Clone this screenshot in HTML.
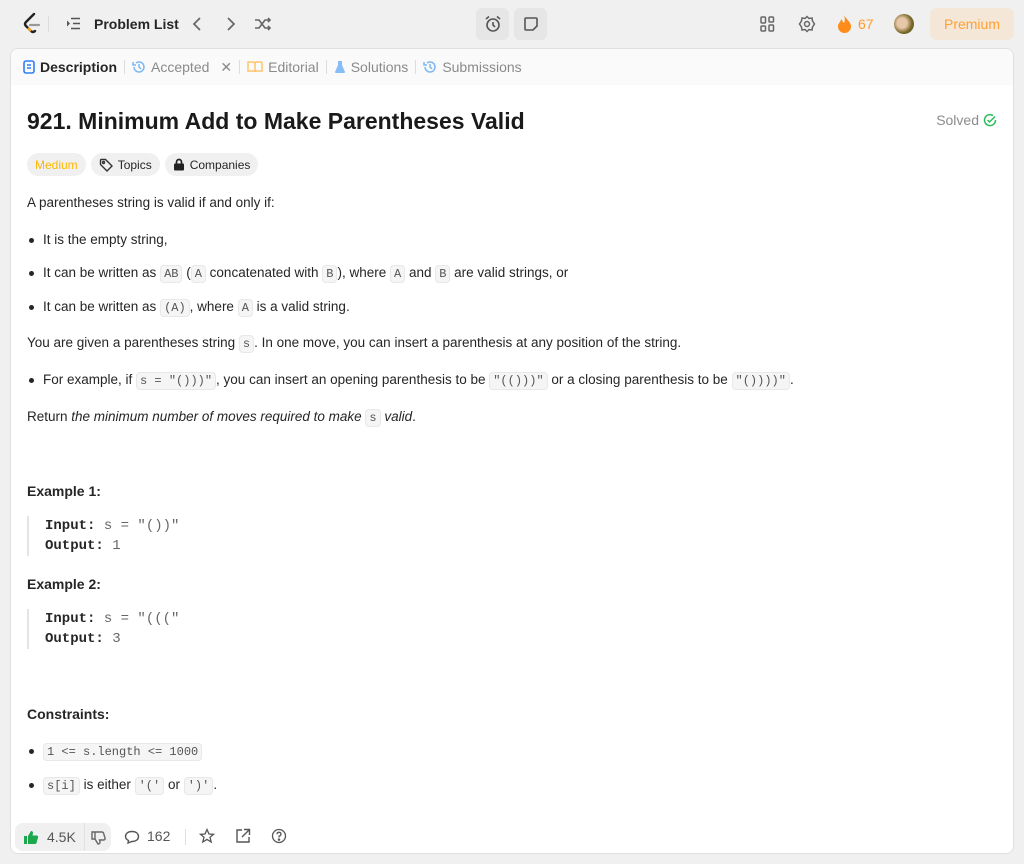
<!DOCTYPE html>
<html><head><meta charset="utf-8"><style>
*{box-sizing:border-box;margin:0;padding:0}
body{width:1024px;height:864px;background:#f0f0f0;font-family:"Liberation Sans",sans-serif;color:#262626;position:relative;overflow:hidden;font-size:14px}
.abs{position:absolute}
.top{height:48px}
.panel{position:absolute;left:10px;top:48px;width:1004px;height:806px;background:#fff;border:1px solid #e0e0e0;border-radius:8px;overflow:hidden}
.tabs{height:36px;background:#fafafa;display:flex;align-items:center;padding-left:12px;font-size:14px;color:#8a8a8a}
.tab{display:flex;align-items:center;gap:5px;padding:0 7px}
.sep{width:1px;height:14px;background:#ddd}
code{font-family:"Liberation Mono",monospace;font-size:12px;background:#f5f5f5;border:1px solid #e8e8e8;border-radius:4px;padding:1px 3px;color:#555}
.c{position:absolute;left:16px;right:16px}
p,li{font-size:13.5px;line-height:20px}
ul{list-style:none}
li{position:relative;padding-left:16px}
li:before{content:"";position:absolute;left:2px;top:8px;width:5px;height:5px;border-radius:50%;background:#262626}
.pill{display:inline-flex;align-items:center;gap:5px;height:23px;padding:0 8px;border-radius:12px;background:#f0f0f0;font-size:12px;color:#262626}
pre{font-family:"Liberation Mono",monospace;font-size:14px;line-height:20px;border-left:2px solid #e4e4e4;padding-left:16px;color:#666}
pre b{color:#262626}
h4{font-size:14px;font-weight:bold}
</style></head><body>
<div class="top">
 <svg class="abs" style="left:22px;top:12px" width="20" height="22" viewBox="0 0 20 22"><path d="M12 2 L4 10 Q2 12 4 14 L9 19 Q11 21 13 19" fill="none" stroke="#222" stroke-width="2.4" stroke-linecap="round"/><path d="M8 13 H17" stroke="#999" stroke-width="2.2" stroke-linecap="round"/><path d="M6 16 L9 19" stroke="#f89f1b" stroke-width="2.4"/></svg>
 <div class="abs" style="left:48px;top:16px;width:1px;height:16px;background:#ddd"></div>
 <svg class="abs" style="left:66px;top:17px" width="15" height="13" viewBox="0 0 15 13" stroke="#555" stroke-width="1.6"><path d="M5 1.5H14M7 6.5H14M5 11.5H14"/><path d="M1 3.5L4 6.5L1 9.5Z" fill="#555" stroke="none"/></svg>
 <div class="abs" style="left:94px;top:16px;font-size:14px;font-weight:bold;color:#262626">Problem List</div>
 <svg class="abs" style="left:190px;top:16px" width="16" height="16" fill="none" stroke="#666" stroke-width="1.7"><path d="M10 2L4 8L10 14"/></svg>
 <svg class="abs" style="left:222px;top:16px" width="16" height="16" fill="none" stroke="#666" stroke-width="1.7"><path d="M6 2L12 8L6 14"/></svg>
 <svg class="abs" style="left:254px;top:16px" width="18" height="16" fill="none" stroke="#666" stroke-width="1.6"><path d="M1 4H5L11 12H16M1 12H5L11 4H16M14 2L16 4L14 6M14 10L16 12L14 14"/></svg>
 <div class="abs" style="left:476px;top:8px;width:33px;height:32px;background:#e6e6e6;border-radius:6px"></div>
 <svg class="abs" style="left:484px;top:15px" width="18" height="18" fill="none" stroke="#555" stroke-width="1.6"><circle cx="9" cy="10" r="6"/><path d="M9 7V10L11 12M2 4L5 1.5M16 4L13 1.5"/></svg>
 <div class="abs" style="left:514px;top:8px;width:33px;height:32px;background:#e6e6e6;border-radius:6px"></div>
 <svg class="abs" style="left:523px;top:16px" width="16" height="16" fill="none" stroke="#555" stroke-width="1.6"><path d="M2 3Q2 2 3 2H13Q14 2 14 3V10L10 14H3Q2 14 2 13Z"/></svg>
 <svg class="abs" style="left:760px;top:16px" width="15" height="16" fill="none" stroke="#666" stroke-width="1.5"><rect x="1" y="1" width="4.5" height="6" rx="1"/><rect x="1" y="10" width="4.5" height="5" rx="1"/><rect x="9" y="1" width="4.5" height="5" rx="1"/><rect x="9" y="9" width="4.5" height="6" rx="1"/></svg>
 <svg class="abs" style="left:798px;top:15px" width="18" height="18" fill="none" stroke="#666" stroke-width="1.5"><circle cx="9" cy="9" r="2.5"/><path d="M9 1.5L11 3.5L14 3L14.5 6L16.5 9L14.5 12L14 15L11 14.5L9 16.5L7 14.5L4 15L3.5 12L1.5 9L3.5 6L4 3L7 3.5Z"/></svg>
 <svg class="abs" style="left:837px;top:14px" width="15" height="19" viewBox="0 0 15 19"><path d="M7 1C9 5 14 8 14 12.5A6.5 6.5 0 0 1 1 12.5C1 9 4 8 4 5C6 7 6 9 7 9C8 7 8 4 7 1Z" fill="#ff8c1a"/></svg>
 <div class="abs" style="left:858px;top:16px;color:#ff9b2f;font-size:14px">67</div>
 <div class="abs" style="left:894px;top:14px;width:20px;height:20px;border-radius:50%;background:radial-gradient(circle at 40% 45%,#e8c7a8 0 30%,#7a6a2a 60%,#4b4a20)"></div>
 <div class="abs" style="left:930px;top:8px;width:84px;height:32px;background:#f5e7d7;border-radius:7px;color:#ffa033;font-size:14px;text-align:center;line-height:32px">Premium</div>
</div>
<div class="panel">
 <div class="tabs">
  <div class="tab" style="color:#262626;font-weight:bold;padding-left:0"><svg width="12" height="14" fill="none" stroke="#2d7ff9" stroke-width="1.6"><rect x="1" y="1" width="10" height="12" rx="2"/><path d="M4 5H8M4 8H8"/></svg>Description</div>
  <div class="sep"></div>
  <div class="tab"><svg width="14" height="14" fill="none" stroke="#7cb8f5" stroke-width="1.5"><path d="M2 7A5 5 0 1 0 4 3M1 2V5H4M7 4V7L9 9"/></svg>Accepted<span style="margin-left:6px">✕</span></div>
  <div class="sep"></div>
  <div class="tab"><svg width="16" height="12" fill="none" stroke="#ffc46b" stroke-width="1.5"><path d="M1 1H6Q8 1 8 3V11Q8 10 6 10H1ZM15 1H10Q8 1 8 3M8 11Q8 10 10 10H15V1"/></svg>Editorial</div>
  <div class="sep"></div>
  <div class="tab"><svg width="12" height="14"><path d="M4 1H8V5L11 12Q11 13 10 13H2Q1 13 1 12L4 5Z" fill="#86bdf7"/></svg>Solutions</div>
  <div class="sep"></div>
  <div class="tab"><svg width="14" height="14" fill="none" stroke="#7cb8f5" stroke-width="1.5"><path d="M2 7A5 5 0 1 0 4 3M1 2V5H4M7 4V7L9 9"/></svg>Submissions</div>
 </div>
 <div class="c" style="top:59px;font-size:23px;font-weight:bold;color:#1a1a1a">921. Minimum Add to Make Parentheses Valid</div>
 <div class="abs" style="right:16px;top:63px;font-size:14px;color:#8c8c8c;display:flex;align-items:center;gap:4px">Solved <svg width="14" height="14" fill="none" stroke="#2cbb5d" stroke-width="1.5"><path d="M12.5 7A5.5 5.5 0 1 1 10 2.5"/><path d="M4.5 7L6.5 9L12 3.5"/></svg></div>
 <div class="c" style="top:104px;display:flex;gap:5px">
  <span class="pill" style="color:#ffb800">Medium</span>
  <span class="pill"><svg width="14" height="14" fill="none" stroke="#333" stroke-width="1.4"><path d="M1.5 2V6.5L8 13L13 8L6.5 1.5H2Z"/><circle cx="4.5" cy="4.5" r="1"/></svg>Topics</span>
  <span class="pill"><svg width="12" height="13"><rect x="1" y="5.5" width="10" height="7" rx="1" fill="#222"/><path d="M3.5 6V4A2.5 2.5 0 0 1 8.5 4V6" fill="none" stroke="#222" stroke-width="1.7"/></svg>Companies</span>
 </div>
 <p class="c" style="top:144px">A parentheses string is valid if and only if:</p>
 <ul class="c" style="top:181px">
  <li>It is the empty string,</li>
  <li style="margin-top:13px">It can be written as <code>AB</code> (<code>A</code> concatenated with <code>B</code>), where <code>A</code> and <code>B</code> are valid strings, or</li>
  <li style="margin-top:13px">It can be written as <code>(A)</code>, where <code>A</code> is a valid string.</li>
 </ul>
 <p class="c" style="top:284px">You are given a parentheses string <code>s</code>. In one move, you can insert a parenthesis at any position of the string.</p>
 <ul class="c" style="top:321px"><li>For example, if <code>s = "()))"</code>, you can insert an opening parenthesis to be <code>"(()))"</code> or a closing parenthesis to be <code>"())))"</code>.</li></ul>
 <p class="c" style="top:358px">Return <i>the minimum number of moves required to make <code style="font-style:normal">s</code> valid</i>.</p>
 <h4 class="c" style="top:434px">Example 1:</h4>
 <pre class="c" style="top:467px"><b>Input:</b> s = "())"
<b>Output:</b> 1</pre>
 <h4 class="c" style="top:527px">Example 2:</h4>
 <pre class="c" style="top:560px"><b>Input:</b> s = "((("
<b>Output:</b> 3</pre>
 <h4 class="c" style="top:657px">Constraints:</h4>
 <ul class="c" style="top:692px">
  <li><code>1 &lt;= s.length &lt;= 1000</code></li>
  <li style="margin-top:13px"><code>s[i]</code> is either <code>'('</code> or <code>')'</code>.</li>
 </ul>
 <div class="abs" style="left:4px;top:774px;width:96px;height:28px;background:#f0f0f0;border-radius:8px;display:flex;align-items:center;font-size:14px;color:#555">
  <svg style="margin-left:8px" width="16" height="15"><path d="M1 6H4V14H1ZM5 6L8 1Q10 1 10 3L9.5 5.5H14Q15.5 6 15 7.5L13.5 13Q13 14 12 14H5Z" fill="#1ca84d"/></svg>
  <span style="margin-left:8px">4.5K</span>
  <div style="width:1px;height:28px;background:#e0e0e0;margin-left:8px"></div>
  <svg style="margin-left:6px" width="16" height="15" fill="none" stroke="#666" stroke-width="1.4"><path d="M1 2H4V9H1ZM4 9L7 14Q9 14 9 12L8.5 10H13Q14.5 9.5 14 8L12.5 3Q12 2 11 2H4"/></svg>
 </div>
 <svg class="abs" style="left:113px;top:781px" width="16" height="14" fill="none" stroke="#555" stroke-width="1.4"><path d="M8 1.5C12 1.5 14.5 3.5 14.5 6.5S12 11.5 8 11.5L4 13L4.5 10.5Q1.5 9 1.5 6.5C1.5 3.5 4 1.5 8 1.5Z"/></svg>
 <div class="abs" style="left:136px;top:779px;font-size:14px;color:#555">162</div>
 <div class="abs" style="left:174px;top:780px;width:1px;height:16px;background:#e0e0e0"></div>
 <svg class="abs" style="left:188px;top:779px" width="16" height="16" fill="none" stroke="#555" stroke-width="1.3"><path d="M8 1.5L10 6L14.5 6.3L11 9.3L12.2 14L8 11.4L3.8 14L5 9.3L1.5 6.3L6 6Z"/></svg>
 <svg class="abs" style="left:224px;top:779px" width="16" height="16" fill="none" stroke="#555" stroke-width="1.4"><path d="M7 2H2V14H14V9M9 1.5H14.5V7M14.5 1.5L7 9"/></svg>
 <svg class="abs" style="left:260px;top:779px" width="16" height="16" fill="none" stroke="#555" stroke-width="1.3"><circle cx="8" cy="8" r="6.5"/><path d="M6 6.2Q6 4.3 8 4.3T10 6.2Q10 7.4 8 8.2V9.5"/><circle cx="8" cy="11.6" r=".6" fill="#555"/></svg>
</div>
</body></html>
